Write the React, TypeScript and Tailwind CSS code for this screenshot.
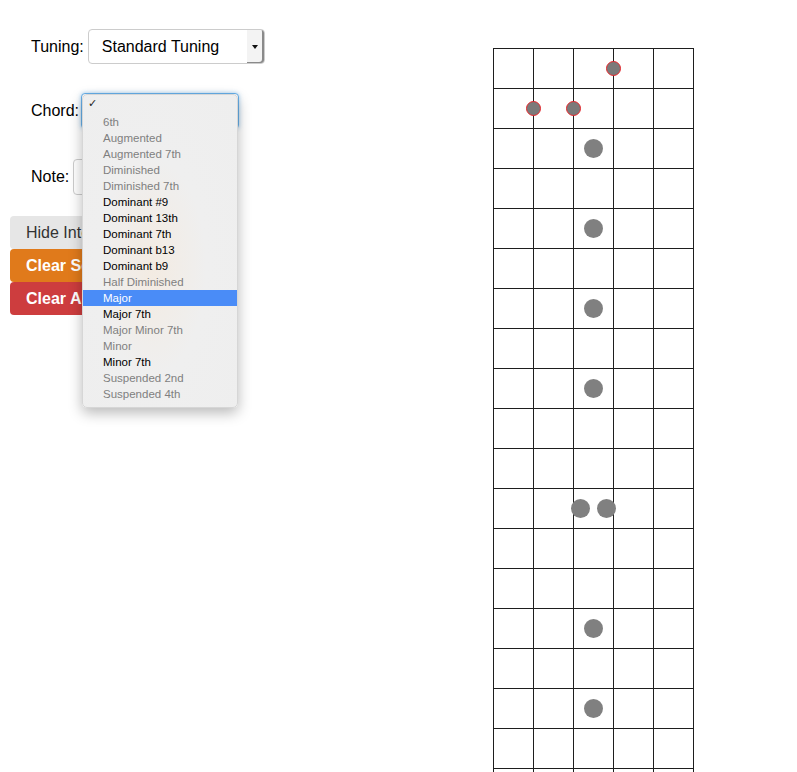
import React from "react";

const items: { label: string; kind: "gray" | "black" | "sel" }[] = [
  { label: "6th", kind: "gray" },
  { label: "Augmented", kind: "gray" },
  { label: "Augmented 7th", kind: "gray" },
  { label: "Diminished", kind: "gray" },
  { label: "Diminished 7th", kind: "gray" },
  { label: "Dominant #9", kind: "black" },
  { label: "Dominant 13th", kind: "black" },
  { label: "Dominant 7th", kind: "black" },
  { label: "Dominant b13", kind: "black" },
  { label: "Dominant b9", kind: "black" },
  { label: "Half Diminished", kind: "gray" },
  { label: "Major", kind: "sel" },
  { label: "Major 7th", kind: "black" },
  { label: "Major Minor 7th", kind: "gray" },
  { label: "Minor", kind: "gray" },
  { label: "Minor 7th", kind: "black" },
  { label: "Suspended 2nd", kind: "gray" },
  { label: "Suspended 4th", kind: "gray" },
];

// centres relative to the fretboard's outer top-left corner (493, 48)
const inlays: [number, number][] = [
  [100, 100],
  [100, 180],
  [100, 260],
  [100, 340],
  [87.5, 460],
  [113.5, 460],
  [100, 580],
  [100, 660],
];

const notes: [number, number][] = [
  [120, 20],
  [40, 60],
  [80, 60],
];

function Fretboard() {
  const rows = Array.from({ length: 19 });
  const cols = Array.from({ length: 5 });
  return (
    <div className="relative mt-[48px] w-[201px] border-l border-t border-[#1e1e1e]">
      {rows.map((_, r) => (
        <div key={r} className="flex">
          {cols.map((_, c) => (
            <div
              key={c}
              className="h-[40px] w-[40px] border-b border-r border-[#1e1e1e]"
            />
          ))}
        </div>
      ))}
      {inlays.map(([x, y], i) => (
        <div
          key={"i" + i}
          className="absolute h-[19px] w-[19px] rounded-full bg-[#808080]"
          style={{ left: x - 10.5, top: y - 10.5 }}
        />
      ))}
      {notes.map(([x, y], i) => (
        <div
          key={"n" + i}
          className="absolute h-[15px] w-[15px] rounded-full border border-[#e8262b] bg-[#7a7a7a]"
          style={{ left: x - 8.5, top: y - 8.5 }}
        />
      ))}
    </div>
  );
}

export default function App() {
  return (
    <div
      className="relative h-[772px] w-[797px] overflow-hidden bg-white text-[16px] text-black"
      style={{ fontFamily: '"Liberation Sans", Arial, sans-serif' }}
    >
      <div className="flex">
        <div className="w-[493px]">
          {/* Tuning */}
          <div className="mt-[29px] flex items-center pl-[31px]">
            <span className="mr-[4px]">Tuning:</span>
            <div className="flex h-[35px] w-[177px] items-stretch rounded-[4px] border border-[#cccccc] bg-white">
              <div className="flex flex-1 items-center pl-[13px] text-[16px]">
                Standard Tuning
              </div>
              <div className="flex w-[17px] items-center justify-center rounded-r-[3px] bg-[#f3f3f3] shadow-[inset_-2px_-1px_0_#8a8a8a]">
                <svg width="6" height="4" viewBox="0 0 6 4" className="mr-[1px]">
                  <path d="M0 0 L6 0 L3 4 Z" fill="#111" />
                </svg>
              </div>
            </div>
          </div>

          {/* Chord */}
          <div className="mt-[29px] flex items-center pl-[31px]">
            <span className="mr-[2px]">Chord:</span>
            <div className="h-[36px] w-[158px] rounded-[4px] border border-[#66afe9] bg-white shadow-[0_0_4px_rgba(102,175,233,0.6)]" />
          </div>

          {/* Note */}
          <div className="mt-[30px] flex items-center pl-[31px]">
            <span className="mr-[4px]">Note:</span>
            <div className="h-[36px] w-[150px] rounded-[4px] border border-[#cccccc] bg-white" />
          </div>

          {/* Buttons */}
          <div className="mt-[21px] flex flex-col items-start pl-[10px]">
            <button className="h-[33px] rounded-[4px] bg-[#e6e6e6] px-[16px] text-left text-[16px] text-[#333333]">
              Hide Intervals
            </button>
            <button className="h-[33px] rounded-[4px] bg-[#e07a1b] px-[16px] text-left text-[16px] font-bold text-white">
              Clear Selection
            </button>
            <button className="h-[33px] rounded-[4px] bg-[#cd3d3e] px-[16px] text-left text-[16px] font-bold text-white">
              Clear All
            </button>
          </div>
        </div>

        <Fretboard />
      </div>

      {/* Open dropdown menu */}
      <div
        className="absolute left-[82px] top-[94px] w-[156px] rounded-[5px] border border-[#d6d6d6] bg-[radial-gradient(ellipse_at_45%_55%,#f3ebe2_0%,#efefef_45%,#eeeeee_100%)] pb-[5px] pt-[3px] shadow-[0_5px_14px_rgba(0,0,0,0.28)]"
        style={{ fontFamily: '"Liberation Sans", Arial, sans-serif' }}
      >
        <div className="relative h-[16px] text-[11.5px] leading-[16px]">
          <span className="absolute left-[5px] top-[-3px] text-[11px] text-[#222]">✓</span>
        </div>
        {items.map((it) => (
          <div
            key={it.label}
            className={
              "h-[16px] pl-[20px] text-[11.5px] leading-[16px] " +
              (it.kind === "sel"
                ? "bg-[#4a8cf7] text-white"
                : it.kind === "black"
                ? "text-black"
                : "text-[#7f7f7f]")
            }
          >
            {it.label}
          </div>
        ))}
      </div>
    </div>
  );
}
